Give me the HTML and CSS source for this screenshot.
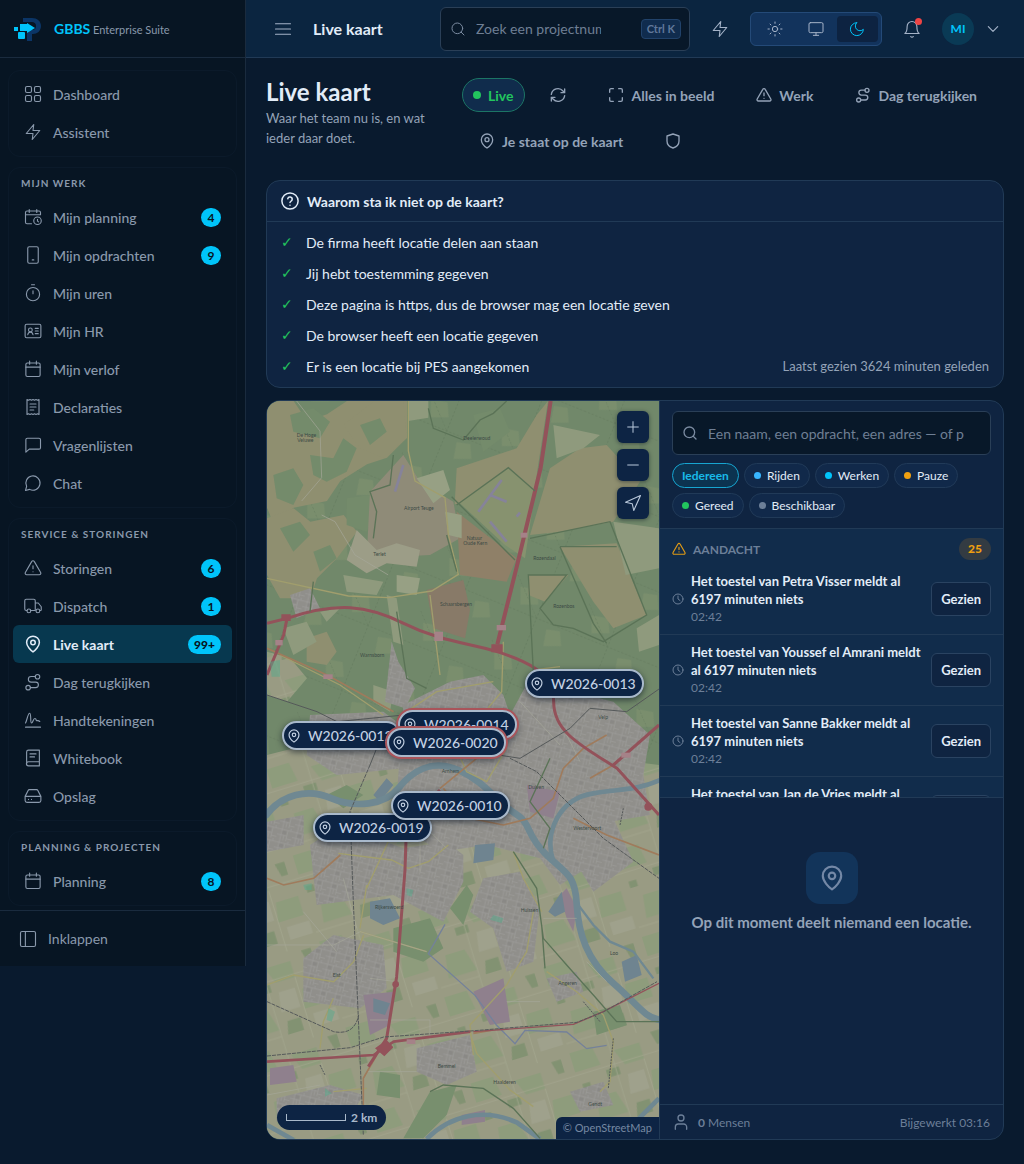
FILE: index.html
```html
<!DOCTYPE html>
<html lang="nl">
<head>
<meta charset="utf-8">
<meta name="viewport" content="width=device-width, initial-scale=1">
<title>Live kaart</title>
<link rel="stylesheet" href="styles.css">
</head>
<body>
<svg class="sprite" aria-hidden="true">
  <symbol id="grid" viewBox="0 0 24 24"><rect x="2" y="2" width="8" height="8" rx="2"/><rect x="14" y="2" width="8" height="8" rx="2"/><rect x="14" y="14" width="8" height="8" rx="2"/><rect x="2" y="14" width="8" height="8" rx="2"/></symbol>
  <symbol id="bolt" viewBox="0 0 24 24"><path d="M13 2 3 14h9l-1 8 10-12h-9z"/></symbol>
  <symbol id="calclock" viewBox="0 0 24 24"><path d="M22 9V6a2 2 0 0 0-2-2H4a2 2 0 0 0-2 2v13a2 2 0 0 0 2 2h6M17 2v4M7 2v4M2 9h20M18 15v2.500l1.500 1"/><circle cx="18" cy="17" r="5"/></symbol>
  <symbol id="phone" viewBox="0 0 24 24"><rect x="5" y="1" width="14" height="22" rx="2"/><path d="M11 18.500h2"/></symbol>
  <symbol id="timer" viewBox="0 0 24 24"><path d="M10 1h4M12 13V9"/><circle cx="12" cy="13.500" r="8.800"/></symbol>
  <symbol id="idcard" viewBox="0 0 24 24"><rect x="1.500" y="3" width="21" height="18" rx="2"/><circle cx="8.500" cy="10.500" r="2.500"/><path d="M5 17c.5-2.500 2-3.500 3.500-3.500s3 1 3.500 3.500M15 8.500h4M15 12h4M15 15.500h4"/></symbol>
  <symbol id="cal" viewBox="0 0 24 24"><rect x="2.500" y="4" width="19" height="18" rx="2"/><path d="M16.500 1.500v4M7.500 1.500v4M2.500 9.500h19"/></symbol>
  <symbol id="receipt" viewBox="0 0 24 24"><path d="M4 2v20l2-1 2 1 2-1 2 1 2-1 2 1 2-1 2 1V2l-2 1-2-1-2 1-2-1-2 1-2-1-2 1zM8 8h8M8 12h8M8 16h5"/></symbol>
  <symbol id="message" viewBox="0 0 24 24"><path d="M22 15.500a2 2 0 0 1-2 2H7l-4.500 4V5a2 2 0 0 1 2-2H20a2 2 0 0 1 2 2z"/></symbol>
  <symbol id="chat" viewBox="0 0 24 24"><path d="M7.500 20.500A9.500 9.500 0 1 0 3.500 16.500L2 22z"/></symbol>
  <symbol id="warn" viewBox="0 0 24 24"><path d="m22.200 18-8.400-14.500a2 2 0 0 0-3.600 0L1.800 18a2 2 0 0 0 1.800 3h16.800a2 2 0 0 0 1.800-3M12 9v4M12 17h.01"/></symbol>
  <symbol id="truck" viewBox="0 0 24 24"><path d="M15 18V5a2 2 0 0 0-2-2H3a2 2 0 0 0-2 2v11a2 2 0 0 0 2 2h1M15 18H8.500M21 18h1a1 1 0 0 0 1-1v-4l-4-5h-4"/><circle cx="18.500" cy="18.500" r="2.500"/><circle cx="6.500" cy="18.500" r="2.500"/></symbol>
  <symbol id="pin" viewBox="0 0 24 24"><path d="M20.500 10c0 5-5.500 10.500-8.500 12.500C9 20.500 3.500 15 3.500 10a8.500 8.500 0 0 1 17 0"/><circle cx="12" cy="10" r="3"/></symbol>
  <symbol id="route" viewBox="0 0 24 24"><circle cx="5.500" cy="19.500" r="3"/><path d="M8.500 19.500h7a3.700 3.700 0 0 0 0-7.400h-6a3.700 3.700 0 0 1 0-7.400H15"/><circle cx="18" cy="5" r="3"/></symbol>
  <symbol id="sign" viewBox="0 0 24 24"><path d="M2 16C4 13 5 3 7.500 3S8 16 10 16s2-6 4.500-6 1 3 2.500 3 2-1 4 1M2 21.500h20"/></symbol>
  <symbol id="book" viewBox="0 0 24 24"><path d="M3.500 20V4A2.500 2.500 0 0 1 6 1.500h14.500v21H6A2.500 2.500 0 0 1 6 17h14.500M8 6.500h8M8 10.500h6"/></symbol>
  <symbol id="drive" viewBox="0 0 24 24"><path d="M22.500 12.500h-21M5.500 4.600 1.500 12.500V18a2.500 2.500 0 0 0 2.500 2.500h16a2.500 2.500 0 0 0 2.500-2.500v-5.500l-4-7.900A2 2 0 0 0 16.800 3.500H7.200a2 2 0 0 0-1.700 1.100M6 16.500h.01M10 16.500h.01"/></symbol>
  <symbol id="panel" viewBox="0 0 24 24"><rect x="2" y="2" width="20" height="20" rx="2"/><path d="M8.500 2v20"/></symbol>
  <symbol id="menu" viewBox="0 0 24 24"><path d="M2 5h20M2 12h20M2 19h20"/></symbol>
  <symbol id="search" viewBox="0 0 24 24"><circle cx="11" cy="11" r="8"/><path d="m21 21-4.300-4.300"/></symbol>
  <symbol id="sun" viewBox="0 0 24 24"><circle cx="12" cy="12" r="4"/><path d="M12 1.500v2M12 20.500v2M4.600 4.600 6 6M18 18l1.400 1.400M1.500 12h2M20.500 12h2M6 18l-1.400 1.400M19.400 4.600 18 6"/></symbol>
  <symbol id="monitor" viewBox="0 0 24 24"><rect x="1.500" y="2.500" width="21" height="15" rx="2"/><path d="M8 21.500h8M12 17.500v4"/></symbol>
  <symbol id="moon" viewBox="0 0 24 24"><path d="M11.500 2.500a7 7 0 0 0 10 10 9.700 9.700 0 1 1-10-10"/></symbol>
  <symbol id="bell" viewBox="0 0 24 24"><path d="M5.500 8.500a6.500 6.500 0 0 1 13 0c0 7 3 9.500 3 9.500h-19s3-2.500 3-9.500M10.300 22a1.940 1.940 0 0 0 3.400 0"/></symbol>
  <symbol id="chevron" viewBox="0 0 24 24"><path d="m4 8 8 8 8-8"/></symbol>
  <symbol id="refresh" viewBox="0 0 24 24"><path d="M2 11a10 10 0 0 1 17.500-5L22 8.500M22 3v5.500h-5.500M22 13a10 10 0 0 1-17.500 5L2 15.500M7.500 15.500H2V21"/></symbol>
  <symbol id="frame" viewBox="0 0 24 24"><path d="M8 2.500H4.500a2 2 0 0 0-2 2V8M21.500 8V4.500a2 2 0 0 0-2-2H16M2.500 16v3.500a2 2 0 0 0 2 2H8M16 21.500h3.500a2 2 0 0 0 2-2V16"/></symbol>
  <symbol id="shield" viewBox="0 0 24 24"><path d="M21 12c0 5.500-4 9-9 10.500-5-1.500-9-5-9-10.500V4.500l9-3 9 3z"/></symbol>
  <symbol id="help" viewBox="0 0 24 24"><circle cx="12" cy="12" r="10.800"/><path d="M9 9a3 3 0 0 1 5.900 1c0 2-2.900 2.500-2.900 4M12 17.500h.01"/></symbol>
  <symbol id="clock" viewBox="0 0 24 24"><circle cx="12" cy="12" r="10"/><path d="M12 6v6l4 3"/></symbol>
  <symbol id="user" viewBox="0 0 24 24"><path d="M20.500 23v-3.500a4.500 4.500 0 0 0-4.500-4.500H8a4.500 4.500 0 0 0-4.500 4.500V23"/><circle cx="12" cy="6" r="4.500"/></symbol>
  <symbol id="plus" viewBox="0 0 24 24"><path d="M4 12h16M12 4v16"/></symbol>
  <symbol id="minus" viewBox="0 0 24 24"><path d="M4 12h16"/></symbol>
  <symbol id="locate" viewBox="0 0 24 24"><path d="m2 11 20-9-9 20-2-9z"/></symbol>
</svg>

<div class="app">
  <aside class="sidebar">
    <div class="brand">
      <svg class="brand-logo" viewBox="0 0 28 24" aria-hidden="true">
        <path d="M9 5V1h9c5 0 9 3 9 8s-4 8-8 8h-1v7h-5V13h5c2 0 4-1 4-4s-2-4-4-4z" fill="#0b3566"/>
        <rect x="6" y="7" width="7" height="7" fill="#00c4fa"/><rect x="0" y="10" width="4" height="4" fill="#00c4fa"/><rect x="4" y="15" width="7" height="7" rx="1" fill="#00c4fa"/><path d="M13 6l8 5-8 5z" fill="#00c4fa"/>
      </svg>
      <p class="brand-name"><strong>GBBS</strong> Enterprise Suite</p>
    </div>
    <nav class="nav" aria-label="Hoofdmenu">
      <div class="group">
        <a class="nav-item" href="#"><svg class="icon"><use href="#grid"/></svg><span>Dashboard</span></a>
        <a class="nav-item" href="#"><svg class="icon"><use href="#bolt"/></svg><span>Assistent</span></a>
      </div>
      <div class="group">
        <h2 class="group-title">MIJN WERK</h2>
        <a class="nav-item" href="#"><svg class="icon"><use href="#calclock"/></svg><span>Mijn planning</span><b class="badge">4</b></a>
        <a class="nav-item" href="#"><svg class="icon"><use href="#phone"/></svg><span>Mijn opdrachten</span><b class="badge">9</b></a>
        <a class="nav-item" href="#"><svg class="icon"><use href="#timer"/></svg><span>Mijn uren</span></a>
        <a class="nav-item" href="#"><svg class="icon"><use href="#idcard"/></svg><span>Mijn HR</span></a>
        <a class="nav-item" href="#"><svg class="icon"><use href="#cal"/></svg><span>Mijn verlof</span></a>
        <a class="nav-item" href="#"><svg class="icon"><use href="#receipt"/></svg><span>Declaraties</span></a>
        <a class="nav-item" href="#"><svg class="icon"><use href="#message"/></svg><span>Vragenlijsten</span></a>
        <a class="nav-item" href="#"><svg class="icon"><use href="#chat"/></svg><span>Chat</span></a>
      </div>
      <div class="group">
        <h2 class="group-title">SERVICE &amp; STORINGEN</h2>
        <a class="nav-item" href="#"><svg class="icon"><use href="#warn"/></svg><span>Storingen</span><b class="badge">6</b></a>
        <a class="nav-item" href="#"><svg class="icon"><use href="#truck"/></svg><span>Dispatch</span><b class="badge">1</b></a>
        <a class="nav-item active" href="#" aria-current="page"><svg class="icon"><use href="#pin"/></svg><span>Live kaart</span><b class="badge">99+</b></a>
        <a class="nav-item" href="#"><svg class="icon"><use href="#route"/></svg><span>Dag terugkijken</span></a>
        <a class="nav-item" href="#"><svg class="icon"><use href="#sign"/></svg><span>Handtekeningen</span></a>
        <a class="nav-item" href="#"><svg class="icon"><use href="#book"/></svg><span>Whitebook</span></a>
        <a class="nav-item" href="#"><svg class="icon"><use href="#drive"/></svg><span>Opslag</span></a>
      </div>
      <div class="group">
        <h2 class="group-title">PLANNING &amp; PROJECTEN</h2>
        <a class="nav-item" href="#"><svg class="icon"><use href="#cal"/></svg><span>Planning</span><b class="badge">8</b></a>
      </div>
    </nav>
    <button class="collapse" type="button"><svg class="icon"><use href="#panel"/></svg>Inklappen</button>
  </aside>

  <div class="content">
    <header class="topbar">
      <button class="icon-btn" type="button" aria-label="Menu"><svg class="icon"><use href="#menu"/></svg></button>
      <p class="topbar-title">Live kaart</p>
      <label class="search topbar-search">
        <svg class="icon small"><use href="#search"/></svg>
        <input type="search" placeholder="Zoek een projectnummer of klant" aria-label="Zoeken">
        <kbd>Ctrl K</kbd>
      </label>
      <button class="icon-btn" type="button" aria-label="Snelle acties"><svg class="icon"><use href="#bolt"/></svg></button>
      <div class="theme" role="group" aria-label="Thema">
        <button type="button" aria-label="Licht"><svg class="icon"><use href="#sun"/></svg></button>
        <button type="button" aria-label="Systeem"><svg class="icon"><use href="#monitor"/></svg></button>
        <button class="on" type="button" aria-label="Donker"><svg class="icon"><use href="#moon"/></svg></button>
      </div>
      <button class="icon-btn bell" type="button" aria-label="Meldingen"><svg class="icon"><use href="#bell"/></svg></button>
      <button class="account" type="button" aria-label="Account"><span class="avatar">MI</span><svg class="icon small"><use href="#chevron"/></svg></button>
    </header>

    <main class="main">
      <div class="head">
        <div>
          <h1>Live kaart</h1>
          <p class="subtitle">Waar het team nu is, en wat ieder daar doet.</p>
        </div>
        <div class="actions">
          <button class="live" type="button"><i class="dot green"></i>Live</button>
          <button class="ghost" type="button" aria-label="Vernieuwen"><svg class="icon small"><use href="#refresh"/></svg></button>
          <button class="ghost" type="button"><svg class="icon small"><use href="#frame"/></svg>Alles in beeld</button>
          <button class="ghost" type="button"><svg class="icon small"><use href="#warn"/></svg>Werk</button>
          <button class="ghost" type="button"><svg class="icon small"><use href="#route"/></svg>Dag terugkijken</button>
          <button class="ghost" type="button"><svg class="icon small"><use href="#pin"/></svg>Je staat op de kaart</button>
          <button class="ghost" type="button" aria-label="Privacy"><svg class="icon small"><use href="#shield"/></svg></button>
        </div>
      </div>

      <section class="card">
        <h2 class="card-title"><svg class="icon"><use href="#help"/></svg>Waarom sta ik niet op de kaart?</h2>
        <ul class="checks">
          <li><span class="check">✓</span>De firma heeft locatie delen aan staan</li>
          <li><span class="check">✓</span>Jij hebt toestemming gegeven</li>
          <li><span class="check">✓</span>Deze pagina is https, dus de browser mag een locatie geven</li>
          <li><span class="check">✓</span>De browser heeft een locatie gegeven</li>
          <li><span class="check">✓</span>Er is een locatie bij PES aangekomen<small>Laatst gezien 3624 minuten geleden</small></li>
        </ul>
      </section>

      <section class="card board">
        <div class="map">
          <svg class="tiles" viewBox="21 18 1176 2214" preserveAspectRatio="xMidYMid slice" aria-hidden="true">
            <defs>
              <pattern id="streets" width="46" height="40" patternUnits="userSpaceOnUse" patternTransform="rotate(14)"><rect width="46" height="40" fill="#908f8b"/><path d="M0 8h46M0 25h30M12 0v40M30 8v32M38 0v8M21 25v15M30 33h16" stroke="#9b9b98" stroke-width="2" fill="none"/><path d="M14 11h12v10H14z" fill="#8a8986"/></pattern>
              <pattern id="fields" width="310" height="270" patternUnits="userSpaceOnUse" patternTransform="rotate(-17)"><rect width="310" height="270" fill="#999b83"/><path d="M0 0h70l10 60H0zM130 30h80v50h-60zM220 120h70v60h-80zM40 150h60l20 70H30z" fill="#8e9c7c"/><path d="M90 80h40v24H90zM250 10h30v40h-20zM150 200h40v40h-50zM10 100h24v20H10z" fill="#829272"/><path d="M150 110h50v60h-60zM230 200h70v40h-70z" fill="#9fa18c"/><path d="M0 70h310M120 0v270M210 80v190M0 240h120" stroke="#a4a68f" stroke-width="2" fill="none"/></pattern>
              <pattern id="woods" width="230" height="210" patternUnits="userSpaceOnUse" patternTransform="rotate(22)"><rect width="230" height="210" fill="#71886a"/><path d="M20 30l50-10 20 40-50 20zM140 120l40-10 20 40-50 20z" fill="#7a8e6d"/><path d="M0 100h230M100 0v210M0 0l100 100" stroke="#647b5e" stroke-width="2" stroke-dasharray="7 5" fill="none"/></pattern>
            </defs>
            <rect x="0" width="1220" height="2250" fill="url(#woods)"/>
            <g fill="#8f8f70">
              <path d="M21 18h80l40 60 60-20 60-40h180v110l-60 60-60 20-80 50-40 60-100 20-60 50-20-50z"/>
              <path d="M21 370l80-30 50 40 100-20 40 50-60 80-60 60-20 60H60l-39-70z"/>
              <path d="M590 220l180-60 60-100 34-42-40 260-60 120-120-80-60 10z"/>
              <path d="M810 420l60-200 90-60 80-10 100 110-80 120-160 30z"/>
              <path d="M900 455l170-10 90 215-100 40-60-80z"/><path d="M805 540h120l-70 80-50-20z"/>
              <path d="M250 90l90-70h90l10 110-70 60-70-30zM140 730l60-20 30 60-30 40-60-10z"/>
            </g>
            <g fill="#748b6b"><path d="M40 240l60-20 30 50-30 60-50-20zM150 180l70 10 30-60 40 30-30 70-60 30-40-20zM260 310l70-10 30 30-40 80-60-20zM90 60l70-20 50 40-30 50-80-20zM640 60l80-20 30 70-80 60zM60 400l60-20 30 40-50 50zM160 470l50-20 20 40-50 40zM300 90l60-20 20 40-50 40z"/></g>
            <g fill="#8f9a7d"><path d="M445 18h60v50l-60 10zM880 90l140 30-50 40-80 30zM1060 380l137 20v120l-100 20zM70 700l70-20 30 60-70 40zM180 650l60-10-40 40zM340 870l60 20-10 60-50-30zM250 540l120 20-20 40-90-10zM1130 700l67-40v90l-60 20zM380 600l30 10 20 140-30-10z"/></g>
            <path d="M330 290l100-110 50 80 100 60 20 110-90 50-190 10z" fill="#8f8b78"/>
            <path d="M290 405l60 60 60-20 70 20-10 50-90-10-60 30-60-40z" fill="#9c9d87"/>
            <path d="M590 350l180 140-30 70-140-20z" fill="#8f8068"/><path d="M600 325l145-105 80 70-30 200-60-40z" fill="#87926f"/>
            <path d="M500 585l110-30 20 90-15 85-95-30z" fill="#887a68"/>
            <g stroke="#86839a" stroke-width="8" fill="none"><path d="M655 350l70-95M690 300l50 20M690 380l50 60M430 210l-25 80M770 365l10-12"/></g>
            <path d="M470 250l80-25 20 60-50 40zM410 540l70 10-10 50-60-10zM555 350l50 10v70l-40-10z" fill="#97a084"/>
            <g fill="url(#fields)"><path d="M21 1080l200-50 200 60 300-40 476 60v1150H21zM21 770l70 20 50 60-60 70-60-20z"/></g>
            <g fill="url(#streets)">
              <path d="M430 930l140-70 100-20 60 60 20 60 60-110 130 40 120 30 110 100-20 120 20 120-120 20-40 120-110 70-60-80-160-40-140 20-90-60-40-100z"/>
              <path d="M150 960l220-10 80 60-20 110-200 20-90-60zM395 740l20 60 50 80-30 60-60-20z"/><path d="M90 600l60-20 30 60-70 30z"/>
              <path d="M150 1350l90-60 190 70 130-20 50 40v80l-60 120-150-80-230 30z"/>
              <path d="M21 1280l110-20v90l-110 20zM670 1450l110-20 60 100-20 170-80 30-40-130-70-50zM930 1290l130-20 60 130-120 90-60-100z"/>
              <path d="M130 1690l90-70 150 30 10 130-80 60-170-20zM470 1960l160-40 20 110-90 40-90-40zM860 1750l90-20 20 60-80 30zM50 2110l160-40 100 30-60 100-200-20zM930 2090l100-30 30 70-100 20z"/>
            </g>
            <g fill="#8f808d"><path d="M640 1790l90-40 20 130-60 10zM310 1800l90-10-10 100-60 30zM30 2020l70-10 10 50-80 10zM900 1500l20-20 30 60-10 70-20-40zM800 1170l100 20-20 80-70-20zM605 2160l70-15v35l-70 10z"/></g>
            <g fill="#788f6e"><path d="M400 1600l110-30 40 90-60 40-90-30zM570 1540l50-70 20 30-30 90zM510 2090l80-20-30 90-70 70h-60zM1000 1850l80-20 20 60-90 30zM360 2030l60 10v70l-70-10zM200 1200l60-30 50 30-60 40z"/></g>
            <g fill="#6f8490"><path d="M330 1520l60-10 30 60-50 20-40-20zM645 1350l60-5-5 50-60 10zM340 1810l50 15-15 35-35-10zM865 1550l40-60 10 60-30 15zM1085 1700l45-20 15 60-50 20zM340 1200l40-50 20 20-40 50z"/></g>
            <g fill="none" stroke="#6f8892">
              <path d="M15 1265c50-70 130-85 200-55s160 20 200-30 100-90 180-55 120 100 170 130 30 60 90 120 90 60 95 150 30 170 110 240 90 100 140 110" stroke-width="20"/>
              <path d="M880 1400c-30-90 20-190 120-205s130-10 200-40M500 2232c70-70 170-95 270-50l70 50M21 2190l80 45M1197 2110l-60 60 60 10" stroke-width="14"/>
              <path d="M940 1510l60 80 50 50 70 30 60 80" stroke-width="7"/>
              <path d="M555 1588l-50 88 140 125 65 90 55 55 30-40 125 5 60 50 60-10" stroke="#74819a" stroke-width="4"/>
            </g>
            <g fill="none" stroke="#a19e6d" stroke-width="4">
              <path d="M445 18v150l20 90 90 50 10 110 30 120-80 50-130 20-120-5L21 550M510 600l30 240M730 740l-5 150-50 60M60 780l180 90 130 90M440 950l90-60 170-30M820 825l80-10M560 1000l60 130 60 30 60-100"/>
              <path d="M320 1480l60-130 40-90M235 1375l160 20 50 25 60-20 60-50M300 1600l20-130M21 1770l80-30 120 20 60-60 30-80M180 1960l10-80 30-70M500 1670l-200-60M640 1980l-10-90 110-120 60-100 20-120M760 1370l30 80 55 100M630 1915l20 60 100 110 70 50M860 1730l90 60 80 70 30 80-10 120-30 30M220 2090l100-10"/>
            </g>
            <g fill="none" stroke="#a6a79a" stroke-width="2">
              <path d="M110 18l70 90 5 140-60 70M185 360l40 20 60 100 100 60M21 1650h200l80-40M300 1610l200 60M330 1750l80 10M130 1550l100 120M250 1450l40 150M330 1875h180v60M320 2030h150M21 2100l160-30M850 1570h100M980 1700l60 60M740 1820h100"/>
              <path d="M470 1270l90 90M480 1330v100M600 1200l80 60M900 980l60 120M780 920l120 130"/>
            </g>
            <g fill="none" stroke="#9f7b5c" stroke-width="5"><path d="M21 760l180 80 200 110M21 1450l50 20 90-20 80-70M540 1180l110-90M550 1180l80 90 100 20 80-20 70-60 30-90 60-60 70-40M310 2130v-80l40-70M640 1915l60-10M1060 1110l-70 40M940 1270l100 50 157 60"/></g>
            <g fill="none" stroke="#93525a" stroke-linejoin="round">
              <path d="M872 18l-30 200-70 290-60 240" stroke-width="12"/>
              <path d="M21 685l60-15c150-50 240-40 350 15s200 60 280 85 170 60 170 150 80 130 190 200l126 140M21 840l50-120 10-50" stroke-width="9"/>
              <path d="M1060 1110l137-120M540 1185l-100 90-5 150-25 320-30 185-55 85" stroke-width="9"/>
              <path d="M21 2000l320-20 60-40 230-30" stroke-width="8"/>
              <path d="M640 1910l300-22 90-38 167-85" stroke-width="4"/>
            </g>
            <g fill="#93525a"><path d="M694 748h34v24h-34zM64 658h28v20H64zM345 1960l35-25 20 22-27 27z"/><circle cx="1165" cy="1235" r="12"/><circle cx="407" cy="1768" r="10"/></g>
            <g fill="none" stroke="#55595a" stroke-width="3">
              <path d="M21 900l150 50 60 30 200-20M330 1110l20-50 70-60 230 70 130 20 150-90 60-60 110 10 100-70"/>
              <path d="M330 1110l-60 140 10 270 30 700M750 1090l80 40 110 110 90 90 167 120M21 1820l200 90c50 10 70-20 75-50M21 1983l250-25 100-32 260-18 320-26 80-32 160-90" stroke-dasharray="12 3"/>
              <path d="M180 2010l15 30M970 1820l50 60M1060 1930l-15 150M1090 1240l-10 50" stroke-dasharray="6 3"/>
            </g>
            <g fill="none" stroke="#5b7357" stroke-width="4">
              <path d="M505 40l15 60 90 35 50-60 40-20 40-37M400 180l-10 90-60 20 20 60-10 80M575 305l190 190M590 330l155-112 80 70M810 430l240-50 110 280-130 80-90-40-60-10-40-50 80-100h-115l15 290M900 455h170M900 455l100 230 40 60M560 420l30 110M160 560l-10 90M410 650l30 200 60 30"/>
              <path d="M870 1090l-60 130 60 80-20 60M760 1370l70 110 20 150 70 80 80 90 70 80h127M845 1590l10 130M510 2090l40-20 120 10 90 60 80 90"/>
            </g>
            <g fill="#58a98b" opacity=".5"><path d="M700 1560l30 10-5 14-35-10zM205 1840l20 10-10 30-15-5zM440 1480l20 5-5 20-15-5zM30 800l30-5v50H35zM195 2080l20 15-20 10zM130 1470l25-5v20h-20z"/></g>
            <g class="shields"><rect x="782" y="413" width="20" height="15"/><rect x="523" y="710" width="26" height="28"/><rect x="710" y="690" width="28" height="16"/><rect x="46" y="735" width="22" height="16"/><rect x="1084" y="1073" width="28" height="15"/><rect x="440" y="1933" width="26" height="14"/><rect x="190" y="838" width="28" height="14"/></g>
            <g class="places">
              <text x="110" y="126">De Hoge</text><text x="112" y="142">Veluwe</text><text x="610" y="136">Deelerwoud</text><text x="340" y="484">Terlet</text>
              <text x="432" y="344">Airport Teuge</text><text x="620" y="435">Natuur</text><text x="610" y="450">Oude Kern</text><text x="820" y="494">Rozendaal</text>
              <text x="540" y="634">Schaarsbergen</text><text x="880" y="640">Rozenbos</text><text x="300" y="786">Warnsborn</text><text x="1015" y="973">Velp</text>
              <text x="545" y="1134">Arnhem</text><text x="805" y="1183">Duiven</text><text x="940" y="1304">Westervoort</text><text x="345" y="1543">Rijkerswoerd</text>
              <text x="782" y="1550">Huissen</text><text x="218" y="1747">Elst</text><text x="895" y="1770">Angeren</text><text x="533" y="2019">Bemmel</text><text x="700" y="2067">Haalderen</text><text x="985" y="2132">Gendt</text><text x="1050" y="1680">Loo</text>
            </g>
          </svg>

          <button class="marker" type="button" style="left:258px;top:268px"><svg class="icon small"><use href="#pin"/></svg>W2026-0013</button>
          <button class="marker" type="button" style="left:15px;top:320px"><svg class="icon small"><use href="#pin"/></svg>W2026-0012</button>
          <button class="marker urgent" type="button" style="left:131px;top:309px"><svg class="icon small"><use href="#pin"/></svg>W2026-0014</button>
          <button class="marker urgent" type="button" style="left:120px;top:327px"><svg class="icon small"><use href="#pin"/></svg>W2026-0020</button>
          <button class="marker" type="button" style="left:46px;top:412px"><svg class="icon small"><use href="#pin"/></svg>W2026-0019</button>
          <button class="marker" type="button" style="left:124px;top:390px"><svg class="icon small"><use href="#pin"/></svg>W2026-0010</button>

          <div class="map-controls">
            <button type="button" aria-label="Inzoomen"><svg class="icon small"><use href="#plus"/></svg></button>
            <button type="button" aria-label="Uitzoomen"><svg class="icon small"><use href="#minus"/></svg></button>
            <button type="button" aria-label="Mijn locatie"><svg class="icon"><use href="#locate"/></svg></button>
          </div>
          <div class="scale"><i></i>2 km</div>
          <a class="credit" href="#">© OpenStreetMap</a>
        </div>

        <div class="panel">
          <div class="filters">
            <label class="search">
              <svg class="icon small"><use href="#search"/></svg>
              <input type="search" placeholder="Een naam, een opdracht, een adres — of postcode" aria-label="Zoek op de kaart">
            </label>
            <div class="chips">
              <button class="chip on" type="button">Iedereen</button>
              <button class="chip" type="button"><i class="dot blue"></i>Rijden</button>
              <button class="chip" type="button"><i class="dot cyan"></i>Werken</button>
              <button class="chip" type="button"><i class="dot amber"></i>Pauze</button>
              <button class="chip" type="button"><i class="dot green"></i>Gereed</button>
              <button class="chip" type="button"><i class="dot grey"></i>Beschikbaar</button>
            </div>
          </div>

          <div class="attention">
            <h2 class="attention-title"><svg class="icon small"><use href="#warn"/></svg>AANDACHT<b>25</b></h2>
            <ul>
              <li><svg class="icon tiny"><use href="#clock"/></svg><p><strong>Het toestel van Petra Visser meldt al 6197 minuten niets</strong><time>02:42</time></p><button type="button">Gezien</button></li>
              <li><svg class="icon tiny"><use href="#clock"/></svg><p><strong>Het toestel van Youssef el Amrani meldt al 6197 minuten niets</strong><time>02:42</time></p><button type="button">Gezien</button></li>
              <li><svg class="icon tiny"><use href="#clock"/></svg><p><strong>Het toestel van Sanne Bakker meldt al 6197 minuten niets</strong><time>02:42</time></p><button type="button">Gezien</button></li>
              <li><svg class="icon tiny"><use href="#clock"/></svg><p><strong>Het toestel van Jan de Vries meldt al 6197 minuten niets</strong><time>02:42</time></p><button type="button">Gezien</button></li>
            </ul>
          </div>

          <div class="empty">
            <span class="empty-icon"><svg class="icon"><use href="#pin"/></svg></span>
            <p>Op dit moment deelt niemand een locatie.</p>
          </div>

          <footer class="panel-foot">
            <svg class="icon small"><use href="#user"/></svg>
            <p><b>0</b> Mensen</p>
            <p class="updated">Bijgewerkt 03:16</p>
          </footer>
        </div>
      </section>
    </main>
  </div>
</div>
</body>
</html>
```
FILE: styles.css
```css
:root {
  --line: #213a56;
  --text: #e2ecf8;
  --muted: #94a3b8;
  --dim: #6c7f98;
  --card: #0f2441;
  --cyan: #00c4fa;
  --green: #22c55e;
}

* { box-sizing: border-box; }

body {
  margin: 0;
  background: #091a2e;
  color: var(--text);
  font-family: Lato, "Open Sans", sans-serif;
  font-size: 14px;
}

h1, h2, p, ul { margin: 0; padding: 0; }
ul { list-style: none; }
a { color: inherit; text-decoration: none; }
button, input { font: inherit; color: inherit; }
button { border: 0; padding: 0; background: none; cursor: pointer; }

.sprite { position: absolute; width: 0; height: 0; }

.icon {
  flex: none;
  width: 18px;
  height: 18px;
  fill: none;
  stroke: currentColor;
  stroke-width: 2;
  stroke-linecap: round;
  stroke-linejoin: round;
}
.icon.small { width: 16px; height: 16px; }
.icon.tiny { width: 12px; height: 12px; }

.dot { flex: none; width: 8px; height: 8px; border-radius: 50%; }
.green { background: var(--green); }
.blue { background: #38b6ff; }
.cyan { background: var(--cyan); }
.amber { background: #f0a010; }
.grey { background: var(--dim); }

.app {
  display: grid;
  grid-template-columns: 246px minmax(0, 1fr);
  align-items: start;
  min-height: 100vh;
}

/* Sidebar */
.sidebar {
  display: flex;
  flex-direction: column;
  height: 83vh;
  background: #071523;
  border-right: 1px solid #1a2b3e;
  color: #8a99ac;
}
.brand {
  flex: none;
  display: flex;
  align-items: center;
  gap: 12px;
  height: 58px;
  padding: 0 14px;
  border-bottom: 1px solid #1a2b3e;
}
.brand-logo { width: 28px; height: 24px; }
.brand-name { font-size: 11px; }
.brand-name strong { color: var(--cyan); font-size: 14px; }

.nav {
  flex: 1;
  min-height: 0;
  overflow: hidden;
  display: flex;
  flex-direction: column;
  gap: 10px;
  padding: 12px 8px 0;
}
.group {
  flex: none;
  padding: 4px 4px 5px;
  border: 1px solid #0b1a2a;
  border-radius: 12px;
}
.group-title {
  height: 26px;
  padding: 0 8px;
  font-size: 10px;
  font-weight: 700;
  line-height: 22px;
  letter-spacing: 1px;
}
.nav-item {
  display: flex;
  align-items: center;
  gap: 11px;
  height: 38px;
  padding: 0 11px;
  border-radius: 6px;
  font-weight: 500;
}
.nav-item .icon { stroke-width: 1.5; }
.nav-item.active { background: #07384f; color: var(--text); font-weight: 700; }
.nav-item.active .icon { stroke-width: 2; }
.badge {
  min-width: 20px;
  margin-left: auto;
  padding: 0 6px;
  border-radius: 10px;
  background: var(--cyan);
  color: #071523;
  font-size: 12px;
  line-height: 19px;
  text-align: center;
}
.collapse {
  flex: none;
  display: flex;
  align-items: center;
  gap: 11px;
  height: 56px;
  padding: 0 19px;
  border-top: 1px solid #1a2b3e;
}
.collapse .icon { stroke-width: 1.5; }

/* Top bar */
.topbar {
  display: flex;
  align-items: center;
  gap: 20px;
  height: 58px;
  padding: 0 24px 0 27px;
  background: #0b2540;
  border-bottom: 1px solid var(--line);
  color: #a5b3c8;
}
.icon-btn { flex: none; display: grid; place-items: center; width: 20px; height: 32px; }
.topbar .icon { stroke-width: 1.5; }
.topbar-title { color: var(--text); font-size: 16px; font-weight: 700; white-space: nowrap; }

.search {
  display: flex;
  align-items: center;
  gap: 10px;
  height: 44px;
  padding: 0 8px 0 9px;
  background: #081829;
  border: 1px solid #2a3f57;
  border-radius: 6px;
  color: #7b8ba1;
}
.search input {
  flex: 1;
  width: 100%;
  min-width: 0;
  padding: 0;
  border: 0;
  outline: 0;
  background: none;
}
.search input::placeholder { color: #6f7f94; opacity: 1; }
.topbar-search { flex: 0 1 250px; min-width: 0; margin-left: auto; }
.topbar-search input { margin-right: 16px; }
.search kbd {
  flex: none;
  padding: 0 5px;
  border: 1px solid #21426a;
  border-radius: 4px;
  background: #102c4e;
  color: #60789a;
  font: 700 11px/18px Lato, sans-serif;
}
.theme {
  flex: none;
  display: flex;
  width: 132px;
  padding: 3px;
  border: 1px solid #244a78;
  border-radius: 6px;
  background: #12335c;
}
.theme button { flex: 1; display: grid; place-items: center; height: 26px; border-radius: 4px; }
.theme .icon { width: 16px; height: 16px; }
.theme .on { background: #0d2341; color: var(--cyan); }
.bell { position: relative; }
.bell::after {
  content: "";
  position: absolute;
  top: 5px;
  right: 0;
  width: 7px;
  height: 7px;
  border-radius: 50%;
  background: #ef4444;
}
.account { flex: none; display: flex; align-items: center; gap: 12px; }
.account .icon { width: 14px; height: 14px; stroke-width: 2; }
.avatar {
  width: 32px;
  border-radius: 50%;
  background: #0a3a55;
  color: var(--cyan);
  font-size: 12px;
  font-weight: 700;
  line-height: 32px;
}

/* Page */
.content { display: flex; flex-direction: column; min-height: 100vh; }
.main {
  flex: 1;
  display: flex;
  flex-direction: column;
  gap: 12px;
  padding: 18px 20px 24px;
}
.head {
  display: grid;
  grid-template-columns: 180px minmax(0, 1fr);
  gap: 16px;
  padding-bottom: 8px;
}
h1 { font-size: 24px; line-height: 32px; }
.subtitle { color: var(--muted); font-size: 13px; line-height: 20px; }
.actions { display: flex; flex-wrap: wrap; align-items: center; gap: 8px; }
.live, .ghost { display: flex; align-items: center; gap: 7px; font-weight: 700; }
.ghost { height: 38px; padding: 0 17px; color: var(--muted); }
.live {
  height: 34px;
  padding: 0 11px 0 10px;
  border: 1px solid #1c7565;
  border-radius: 17px;
  background: #102c4c;
  color: var(--green);
}

.card { background: var(--card); border: 1px solid var(--line); border-radius: 14px; }
.card-title {
  display: flex;
  align-items: center;
  gap: 8px;
  height: 41px;
  padding: 0 14px;
  border-bottom: 1px solid var(--line);
  font-size: 14px;
}
.checks { padding: 5px 14px; }
.checks li { display: flex; line-height: 31px; }
.check { width: 25px; color: var(--green); font-family: "DejaVu Sans", sans-serif; }
.checks small { margin-left: auto; color: var(--muted); font-size: 13px; }

/* Map board */
.board {
  flex: 1;
  display: grid;
  grid-template-columns: minmax(0, 1fr) 344px;
  overflow: hidden;
}
.map { position: relative; overflow: hidden; background: #71886a; }
.tiles { position: absolute; width: 100%; height: 100%; }
.places { fill: #3c4a45; font-size: 15px; }
.shields { fill: #a58288; }

.marker {
  position: absolute;
  display: flex;
  align-items: center;
  gap: 7px;
  width: 119px;
  height: 29px;
  padding: 0 3px;
  border: 2px solid #a9b9cb;
  border-radius: 15px;
  background: #0d2444;
  box-shadow: 0 2px 6px rgba(5, 15, 30, .6);
  color: #c4d2e4;
  font-size: 14px;
  font-weight: 500;
  white-space: nowrap;
}
.marker .icon { width: 14px; height: 14px; }
.marker.urgent { box-shadow: 0 0 0 2px #a9545a, 0 3px 8px rgba(5, 15, 30, .6); }

.map-controls {
  position: absolute;
  top: 10px;
  right: 10px;
  display: grid;
  gap: 6px;
}
.map-controls button {
  display: grid;
  place-items: center;
  width: 32px;
  height: 32px;
  border-radius: 6px;
  background: #0d2444;
  box-shadow: 0 1px 4px rgba(5, 15, 30, .5);
  color: #b9c8db;
}
.map-controls .icon { stroke-width: 1.5; }
.scale {
  position: absolute;
  left: 10px;
  bottom: 9px;
  display: flex;
  align-items: center;
  gap: 5px;
  height: 25px;
  padding: 0 9px;
  border-radius: 13px;
  background: #0d2444;
  color: #a9b9cb;
  font-size: 12px;
  font-weight: 700;
}
.scale i { width: 60px; height: 7px; border: 1px solid #a9b9cb; border-top: 0; }
.credit {
  position: absolute;
  right: 0;
  bottom: 0;
  padding: 0 7px;
  border-radius: 6px 0 0;
  background: #0d2444;
  color: #7588a2;
  font-size: 11px;
  line-height: 22px;
}

/* Side panel */
.panel { display: flex; flex-direction: column; border-left: 1px solid var(--line); }
.filters { padding: 10px 12px; border-bottom: 1px solid var(--line); }
.filters .search { padding-right: 12px; }
.chips { display: flex; flex-wrap: wrap; gap: 5px; padding-top: 8px; }
.chip {
  display: flex;
  align-items: center;
  gap: 6px;
  height: 25px;
  padding: 0 9px;
  border: 1px solid #213a58;
  border-radius: 13px;
  background: #11294a;
  font-size: 12px;
}
.chip .dot { width: 7px; height: 7px; }
.chip.on { border-color: #17a5d0; background: #0c3350; color: #19b9e8; font-weight: 700; }

.attention {
  height: 269px;
  overflow: hidden;
  background: #112c4b;
  border-bottom: 1px solid var(--line);
}
.attention-title {
  display: flex;
  align-items: center;
  gap: 7px;
  padding: 9px 12px 4px;
  color: var(--dim);
  font-size: 12px;
}
.attention-title .icon { width: 14px; height: 14px; color: #e09a15; }
.attention-title b {
  margin-left: auto;
  padding: 0 9px;
  border-radius: 11px;
  background: #333b42;
  color: #f0a010;
  line-height: 22px;
}
.attention li {
  display: flex;
  align-items: center;
  gap: 7px;
  padding: 8px 12px;
  border-bottom: 1px solid var(--line);
  color: var(--dim);
}
.attention p { flex: 1; min-width: 0; font-size: 13px; line-height: 18px; }
.attention strong, .attention time { display: block; }
.attention strong { color: var(--text); }
.attention time { font-size: 12px; }
.attention button {
  height: 34px;
  padding: 0 9px;
  border: 1px solid #2a4361;
  border-radius: 6px;
  background: #0f2441;
  color: var(--text);
  font-size: 13px;
  font-weight: 700;
}

.empty {
  flex: 1;
  display: flex;
  flex-direction: column;
  align-items: center;
  gap: 8px;
  padding: 54px 12px 24px;
  color: var(--muted);
  font-size: 15px;
  font-weight: 700;
  line-height: 20px;
}
.empty-icon {
  display: grid;
  place-items: center;
  width: 52px;
  height: 52px;
  border-radius: 14px;
  background: #12345a;
  color: #7488a6;
}
.empty-icon .icon { width: 26px; height: 26px; }

.panel-foot {
  display: flex;
  align-items: center;
  gap: 9px;
  height: 35px;
  padding: 0 13px;
  border-top: 1px solid var(--line);
  color: var(--dim);
  font-size: 12px;
}
.updated { margin-left: auto; }
```
